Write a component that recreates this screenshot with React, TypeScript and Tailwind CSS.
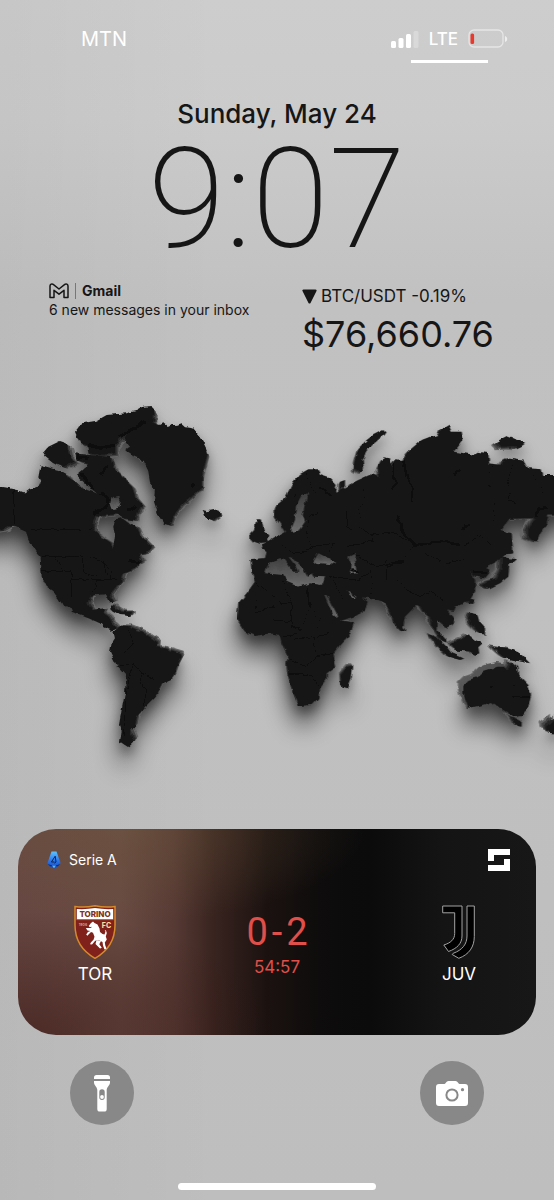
import React from "react";

const WEST = [
  // North America
  "M0 290L20 293L50 300L72 308L90 295L115 290L122 275L115 262L122 225L140 230L175 240L195 250L205 262L225 275L245 295L290 310L300 370L285 378L277 405L285 425L310 445L330 457L338 475L345 440L340 410L345 388L365 385L385 400L410 410L420 435L440 455L455 470L440 487L415 492L425 515L405 530L385 545L370 550L362 575L340 602L330 615L340 635L328 637L318 612L270 617L262 640L275 660L300 658L312 655L308 668L325 680L335 700L350 715L335 722L310 710L300 700L265 685L215 665L210 650L190 648L175 625L160 605L140 590L125 560L122 500L105 480L85 450L78 425L45 410L20 408L0 420L-60 430L-60 285Z",
  // Arctic islands
  "M128 190L145 170L180 153L200 160L205 190L223 215L190 230L160 220L135 200Z",
  "M225 125L245 100L290 92L320 75L380 70L410 62L430 50L455 48L462 65L460 95L440 100L400 120L365 140L345 165L345 190L300 195L265 190L262 165L240 160Z",
  "M225 190L270 195L330 200L340 235L370 265L395 290L405 320L427 345L412 370L405 390L370 385L350 372L300 378L275 365L295 345L290 310L250 275L230 255L255 235L265 220L230 210Z",
  // Greenland, Iceland, Cuba
  "M370 145L400 115L440 92L465 100L480 105L490 100L500 108L515 102L530 108L545 103L555 112L580 115L600 140L615 170L622 190L612 230L605 260L605 295L580 315L545 345L525 370L510 405L490 400L475 375L462 335L465 295L450 280L445 240L430 210L395 195L375 180L390 170Z",
  "M608 360L622 364L655 358L660 375L640 390L615 380Z",
  "M332 645L365 665L395 665L392 678L360 675L335 660Z",
  // South America
  "M340 725L360 708L385 709L425 726L450 742L472 757L471 772L495 776L542 790L545 800L530 830L518 865L485 880L465 920L430 955L410 980L404 1010L390 1025L402 1055L385 1072L360 1055L365 1025L357 1005L365 960L375 910L378 855L350 825L330 785L335 760L345 745Z",
];

const EAST = [
  // Europe, Asia and Africa
  "M135 325L140 315L165 295L190 245L210 222L235 208L265 208L270 225L300 235L320 255L315 275L330 270L350 258L385 240L425 222L450 232L445 200L460 172L480 175L485 200L495 178L520 180L540 150L575 120L600 110L625 105L642 80L655 72L665 95L695 95L700 120L680 145L670 155L735 165L745 155L775 160L778 190L815 195L830 175L880 182L895 205L935 208L940 225L1040 225L1040 345L955 345L950 370L930 400L920 425L895 415L895 385L915 353L840 355L812 390L845 400L850 460L825 462L800 485L770 500L778 520L765 535L740 530L720 515L735 540L735 575L720 600L690 612L665 625L650 630L670 655L668 675L652 683L630 665L620 660L620 690L648 715L650 728L635 720L605 675L600 650L580 635L570 618L560 615L525 650L520 680L530 697L510 690L490 665L475 625L460 605L430 595L395 592L413 605L405 630L370 650L332 662L372 668L362 700L330 735L310 760L318 800L290 820L290 840L270 865L265 895L245 915L205 918L190 880L172 820L170 790L175 770L155 730L150 705L120 700L75 708L45 695L22 660L25 610L50 580L75 545L65 520L62 480L105 478L110 455L95 445L100 435L130 415L150 405L165 395L150 370L135 350Z",
  // British Isles
  "M60 400L72 388L80 358L95 358L100 390L117 405L110 428L90 430L62 420Z",
  // Russian Arctic islands
  "M460 90L467 98L440 120L410 150L398 180L402 205L390 215L372 205L375 180L385 145L410 120L430 105Z",
  "M330 245L345 240L345 255L330 270Z",
  "M800 125L830 108L855 118L888 130L870 140L850 138L815 140Z",
  // Japan, Taiwan, Hainan, Philippines
  "M815 470L858 478L838 495L835 530L810 550L775 567L757 555L770 545L800 535L815 505Z",
  "M715 598L735 598L730 612L716 610Z",
  "M655 620L678 620L672 632L658 630Z",
  "M722 640L742 642L748 665L765 685L765 705L745 695L725 675L718 655Z",
  // Indonesia, New Guinea
  "M598 703L620 710L650 740L665 760L703 776L690 780L655 770L630 745Z",
  "M665 732L695 718L718 706L735 720L758 730L745 742L748 760L735 765L725 755L680 752L668 740Z",
  "M790 742L830 748L850 750L870 760L900 790L860 782L825 775L808 760Z",
  // Australia, Tasmania, New Zealand
  "M700 855L715 840L740 832L760 815L785 808L805 800L822 800L832 812L845 787L862 802L865 825L895 855L903 885L895 920L880 945L850 948L820 930L785 905L750 917L715 923L708 905L700 880Z",
  "M842 950L875 963L875 980L860 978Z",
  "M985 955L965 970L950 980L955 998L985 1002Z",
  // Madagascar
  "M332 825L354 800L367 798L362 835L350 865L334 860Z",
];

const SEAS = [
  "M215 285L235 280L225 310L218 345L225 365L205 393L180 395L195 360L197 320Z",
  "M105 520L115 490L150 478L165 480L190 515L205 515L195 495L175 470L190 475L215 500L235 535L245 520L250 530L285 532L275 555L240 550L205 560L170 545L160 525Z",
  "M250 485L265 460L290 472L315 485L300 495L260 492Z",
  "M355 470L380 458L375 480L380 520L362 522L365 495Z",
  "M283 585L290 585L318 640L322 655L310 645Z",
  "M350 570L380 592L372 595L355 582Z",
];

const BORDERS_EAST =
  "M205 225L195 300L195 340M228 215L240 250L262 285L262 340L240 345M240 345L230 400L245 440L310 430L300 455M150 430L190 460L225 455L250 440M400 260L405 300L385 330L395 360L385 380L425 405L430 420L350 440M425 405L490 398L530 420L560 440M350 330L350 380L365 390M370 460L440 500L520 480L555 430M420 500L430 560L420 590M470 480L470 540L440 570M500 530L530 570L570 590L600 575L640 600M580 455L640 490L700 480L720 455M700 440L750 405L790 440M790 200L765 240L800 280L790 340L800 390M850 190L835 240L840 300L860 310M910 225L935 260L940 290M310 540L340 600M300 530L380 540L420 520M75 545L120 580L155 610L185 610L160 540M80 600L75 640L130 620M185 610L185 680L215 690L240 620L230 560M235 560L235 615L285 615M130 620L130 660L185 665M240 620L270 660L260 710L300 700M190 720L250 710L260 770L230 800L175 780M260 770L310 760M175 820L220 820L235 850M215 825L250 830L265 860M205 918L205 860M160 710L200 700M780 808L780 905M780 858L850 858L850 948M850 890L900 890";
const RIDGES_EAST =
  "M490 190L490 230L500 250L485 265M520 180L530 230L550 270L545 310M500 345L512 370L515 395L560 438L590 430L640 425L690 435M670 225L692 208M695 390L720 370M270 260L300 285M920 350L925 325L955 320M730 515L770 520M365 510L385 515M470 500L520 485";
const BORDERS_WEST =
  "M40 300L40 408M90 418L270 420L275 410M125 500L270 498L300 510L335 540L330 570M245 500L255 550L290 560M215 540L215 620M125 545L215 545M165 500L190 545M215 568L350 568M290 570L280 610M310 510L320 560M350 830L400 820L430 850L460 870M385 720L400 760L370 790M400 820L380 900L370 1040M430 850L420 880L440 900L430 950";
const RIDGES_WEST =
  "M265 165L300 175L345 165M230 200L265 205M300 255L325 225M245 250L280 300M300 310L325 325L320 350L280 370M360 140L400 115L435 95M385 360L410 350M575 280L585 290M385 510L420 520";

function Continents() {
  return (
    <>
      <g>
        {WEST.map((d) => (
          <path key={d} d={d} />
        ))}
      </g>
      <g transform="translate(690 30)">
        {EAST.map((d) => (
          <path key={d} d={d} />
        ))}
      </g>
    </>
  );
}

function WorldMap() {
  return (
    <svg viewBox="0 0 1662 1200" className="block w-full" role="img" aria-label="World map">
      <defs>
        <filter id="rough" x="-5%" y="-5%" width="110%" height="110%">
          <feTurbulence type="fractalNoise" baseFrequency="0.06" numOctaves="1" seed="4" result="n" />
          <feDisplacementMap in="SourceGraphic" in2="n" scale="14" xChannelSelector="R" yChannelSelector="G" />
        </filter>
        <filter id="wide" x="-10%" y="-10%" width="120%" height="130%">
          <feGaussianBlur stdDeviation="36" />
        </filter>
        <filter id="near" x="-10%" y="-10%" width="120%" height="130%">
          <feGaussianBlur stdDeviation="16" />
        </filter>
        <linearGradient id="sea" x1="0" y1="0" x2="0" y2="1">
          <stop offset="0" stopColor="#3c3c3c" />
          <stop offset="1" stopColor="#6c6c6c" />
        </linearGradient>
        <linearGradient id="wall" x1="0" y1="0" x2="1" y2="1">
          <stop offset="0" stopColor="#666" />
          <stop offset="1" stopColor="#333" />
        </linearGradient>
      </defs>
      <g transform="translate(-6 60)" filter="url(#wide)" opacity="0.55">
        <Continents />
      </g>
      <g transform="translate(0 22)" filter="url(#near)" opacity="0.36">
        <Continents />
      </g>
      <g filter="url(#rough)">
        <g transform="translate(25 16) scale(0.97)" fill="#666">
          <Continents />
        </g>
        <g transform="translate(17 11) scale(0.98)" fill="#424242">
          <Continents />
        </g>
        <g transform="translate(8 6) scale(0.99)" fill="#282828">
          <Continents />
        </g>
        <g transform="translate(690 30)">
          <path
            fill="url(#wall)"
            d="M686 845L700 832L730 822L745 802L770 792L800 786L822 790L825 810L760 825L715 860L706 885L716 925L706 918L692 880Z"
          />
        </g>
        <g fill="#171717">
          <Continents />
        </g>
        <g fill="url(#sea)">
          <path d="M335 322L355 318L362 335L358 352L335 358L330 345Z" />
          <g transform="translate(690 30)">
            {SEAS.map((d) => (
              <path key={d} d={d} />
            ))}
          </g>
        </g>
        <g fill="none" stroke="#0b0b0b" strokeLinejoin="round">
          <path d={BORDERS_WEST} strokeWidth="2" />
          <path d={RIDGES_WEST} strokeWidth="9" />
          <g transform="translate(690 30)">
            <path d={BORDERS_EAST} strokeWidth="2" />
            <path d={RIDGES_EAST} strokeWidth="6" />
          </g>
        </g>
      </g>
    </svg>
  );
}

function Signal() {
  return (
    <svg width="28" height="18" viewBox="0 0 28 18" fill="#fff" aria-label="Signal strength">
      <rect x="0" y="11" width="5" height="7" rx="1.5" />
      <rect x="7.500" y="8" width="5" height="10" rx="1.5" />
      <rect x="15" y="4" width="5" height="14" rx="1.5" />
      <rect x="22.500" y="1" width="5" height="17" rx="1.5" opacity="0.25" />
    </svg>
  );
}

function Battery() {
  return (
    <svg width="40" height="20" viewBox="0 0 40 20" fill="none" aria-label="Battery low">
      <rect x="1" y="1" width="34" height="17" rx="5" stroke="#fff" strokeOpacity="0.5" strokeWidth="1.3" />
      <rect x="2.500" y="4.500" width="3.600" height="10.500" rx="1.500" fill="#e8392c" />
      <path d="M37 7v6c1.600-.6 2.200-1.700 2.200-3S38.600 7.600 37 7Z" fill="#fff" fillOpacity="0.65" />
    </svg>
  );
}

function GmailMark() {
  return (
    <svg width="20" height="16" viewBox="0 0 20 16" fill="none" stroke="#161616" strokeWidth="1.500" strokeLinejoin="round" aria-hidden="true">
      <path d="M1 14.500V3c0-1.700 1.900-2.600 3.200-1.600L10 6l5.800-4.600C17.100.4 19 1.300 19 3v11.500h-4V7.300L10 11.200 5 7.300v7.200H1Z" />
    </svg>
  );
}

function SerieAMark() {
  return (
    <svg width="14" height="18" viewBox="0 0 14 18" aria-hidden="true">
      <defs>
        <linearGradient id="sa" x1="0" y1="0" x2="0" y2="1">
          <stop offset="0" stopColor="#5cc4ff" />
          <stop offset="0.500" stopColor="#2c7bf0" />
          <stop offset="1" stopColor="#1746b8" />
        </linearGradient>
      </defs>
      <path d="M4.500.5h5L13.700 12.500 11 15.200 7 17.700 3 15.200.3 12.500Z" fill="url(#sa)" />
      <path d="M8.200 5.200 4.400 11h3M8.200 5.200 9 11 7.300 12.200" fill="none" stroke="#0b2350" strokeWidth="1" />
      <path d="m.6 12.800 3.400 1.400h6l3.400-1.400L11 15.300H3Z" fill="#0d2f7d" />
      <path d="m5 14.600 2 2.600 2-2.600Z" fill="#57b8ff" />
    </svg>
  );
}

function SofaMark() {
  return (
    <svg width="22" height="22" viewBox="0 0 22 22" fill="#fff" aria-label="Live score provider">
      <path d="M0 0h22v6H6v6H0Z" />
      <path d="M22 22H0v-6h16v-6h6Z" />
    </svg>
  );
}

function TorinoCrest() {
  return (
    <svg width="42" height="54" viewBox="0 0 42 54" aria-label="Torino crest">
      <path d="M1 1.500Q11 3 21 .7 31 3 41 1.500V20c0 15-8 26.500-20 33.300C9 46.500 1 35 1 20Z" fill="#80211c" stroke="#d58a2c" strokeWidth="1.500" />
      <path d="M2.800 4Q12 4.600 21 3q9 1.600 18.200 1v10.100H2.800Z" fill="#fff" />
      <text x="21" y="12" textAnchor="middle" fontSize="8" fontWeight="800" fontFamily="Inter, sans-serif" fill="#80301c">TORINO</text>
      <path d="M2.500 14.600h37" stroke="#d58a2c" strokeWidth="0.800" />
      <text x="32.500" y="23.200" textAnchor="middle" fontSize="7" fontWeight="800" fontFamily="Inter, sans-serif" fill="#f7dfa0">FC</text>
      <text x="9" y="20.500" textAnchor="middle" fontSize="3.500" fontWeight="600" fontFamily="Inter, sans-serif" fill="#d9a8a0">1906</text>
      <g transform="translate(0 1)" fill="#fff">
        <path d="m17 17 2-1.500 1.500 1.500 3 1.500 2 4 .5 3.500 2.500 2 2 .5 1-3-.8-1.500 1.300.6.800 2.400-1 3.500 1 3-2 3 .5 3 1.200 3-2 1-1.500-4-.5-3.500-3-1.500-2.500-.5-2 1-3 3.500-2-.3 1-2 2.500-2.500 1-3-1.500-4-2-.6-2 2-1.600 1.600-1.200-1.200 1.700-2.600 2.500-1-3-.4-1.500-2.500h5l1-1.200-2 .4-1.200-1.200Z" />
        <path d="m22.500 34-1 4 4.500 4.500 1.800-.7-2.500-3.500L27 35Z" />
      </g>
    </svg>
  );
}

function JuventusMark() {
  return (
    <svg width="33" height="54" viewBox="0 0 33 54" fill="#000" stroke="#a3a3a3" strokeWidth="1" aria-label="Juventus crest">
      <path d="M.7 1H20v30c0 7.500-5 12.500-13.500 15.500L1.800 40C8.500 38 12.700 34.500 12.700 28.500V7.800H.7Z" />
      <path d="M25 1h7.300v30.500C32.300 42 27 49.500 16.800 53.300l-6.600-3.800 1-1.200C20.500 45 25 39 25 31Z" />
    </svg>
  );
}

function Flashlight() {
  return (
    <svg width="16" height="37" viewBox="0 0 16 37" fill="#fff" aria-hidden="true">
      <path d="M2.500 0h11A2.500 2.500 0 0 1 16 2.500V4H0V2.500A2.500 2.500 0 0 1 2.500 0Z" />
      <path fillRule="evenodd" d="M0 6h16v1.500c0 2.700-3.300 4.500-3.300 7.500v19a2.600 2.600 0 0 1-2.600 2.600H5.900A2.600 2.600 0 0 1 3.300 34V15C3.300 12 0 10.200 0 7.500ZM8 14.300a2.700 2.700 0 0 0-2.700 2.700v5.200a2.700 2.700 0 0 0 5.400 0V17A2.700 2.700 0 0 0 8 14.300Z" />
      <circle cx="8" cy="22" r="1.900" />
    </svg>
  );
}

function Camera() {
  return (
    <svg width="32" height="25" viewBox="0 0 32 25" aria-hidden="true">
      <path d="M3 3h5.500c1.200 0 1.700-3 4-3h7c2.300 0 2.800 3 4 3H29a3 3 0 0 1 3 3v16a3 3 0 0 1-3 3H3a3 3 0 0 1-3-3V6a3 3 0 0 1 3-3Z" fill="#fff" />
      <circle cx="16" cy="14" r="5.600" fill="none" stroke="#888" strokeWidth="2" />
      <circle cx="26.500" cy="8.700" r="1.600" fill="#888" />
    </svg>
  );
}

function Team({ name, children }: { name: string; children: React.ReactNode }) {
  return (
    <div className="flex w-[70px] flex-col items-center gap-[3px]">
      {children}
      <span className="text-[17px] leading-6 text-white">{name}</span>
    </div>
  );
}

export default function App() {
  return (
    <main className="flex min-h-screen w-full flex-col overflow-hidden bg-[linear-gradient(to_right,rgba(0,0,0,0.03),transparent_40%),linear-gradient(to_bottom,#cdcdcd,#cbcbcb_10%,#c1c1c1_25%,#bebebe)] font-['Inter',sans-serif] text-[#161616]">
      <header className="flex items-start justify-between pt-[27px] pr-[46px] pl-[81px] text-white">
        <span className="text-[20px] leading-6">MTN</span>
        <div className="flex flex-col items-center gap-[9px]">
          <div className="flex h-6 items-center gap-[10px]">
            <Signal />
            <span className="text-[17px] leading-6 font-medium">LTE</span>
            <Battery />
          </div>
          <div className="h-[3px] w-[77px] bg-white" />
        </div>
      </header>

      <section className="flex flex-col items-center pt-[35px]">
        <p className="text-[26px] leading-8 font-medium">Sunday, May 24</p>
        <time className="font-['Roboto',sans-serif] text-[140px] leading-[138px] font-extralight">9:07</time>
      </section>

      <section className="grid grid-cols-[253px_1fr] pt-[14px] pl-[49px]">
        <div>
          <div className="flex h-[18px] items-center gap-[6px]">
            <GmailMark />
            <span className="h-4 w-px bg-[#777]" />
            <span className="text-[14px] leading-[18px] font-bold">Gmail</span>
          </div>
          <p className="text-[14px] leading-5">6 new messages in your inbox</p>
        </div>
        <div className="pt-[2px]">
          <div className="flex items-center gap-1 text-[17px] leading-6">
            <svg width="15" height="15" viewBox="0 0 15 15" fill="#161616" aria-hidden="true">
              <path d="M1.500.5h12c1 0 1.400.8 1 1.600l-6 11.800c-.4.8-1.600.8-2 0L.5 2.100C.1 1.300.5.5 1.500.5Z" />
            </svg>
            <span>BTC/USDT -0.19%</span>
          </div>
          <p className="text-[36px] leading-[52px]">$76,660.76</p>
        </div>
      </section>

      <div className="pt-[30px]">
        <WorldMap />
      </div>

      <section className="mx-[18px] mt-[39px] flex flex-col rounded-[38px] bg-[radial-gradient(ellipse_50%_60%_at_0%_100%,rgba(52,18,16,0.55),transparent),radial-gradient(ellipse_45%_45%_at_22%_0%,rgba(112,92,62,0.4),transparent),linear-gradient(to_right,#674742,#684a42_20%,#573a34_30%,#38231f_38%,#1b1210_48%,#0e0c0c_58%,#0b0b0c_68%,#141415_82%,#171717)] px-[26px] pt-[20px] pb-[49px]">
        <div className="flex items-center justify-between pl-[3px]">
          <div className="flex items-center gap-2">
            <SerieAMark />
            <span className="text-[14px] leading-[22px] text-white">Serie A</span>
          </div>
          <SofaMark />
        </div>
        <div className="flex justify-between px-[16px] pt-[34px]">
          <Team name="TOR">
            <TorinoCrest />
          </Team>
          <div className="flex flex-col items-center pt-[7px] text-[#e04f49]">
            <div className="flex gap-1 font-['Roboto',sans-serif] text-[38px] leading-10">
              <span>0</span>
              <span>-</span>
              <span>2</span>
            </div>
            <span className="text-[17px] leading-[30px]">54:57</span>
          </div>
          <Team name="JUV">
            <JuventusMark />
          </Team>
        </div>
      </section>

      <nav className="flex justify-between px-[70px] pt-[26px]">
        <button type="button" aria-label="Flashlight" className="flex size-16 items-center justify-center rounded-full bg-[#888]">
          <Flashlight />
        </button>
        <button type="button" aria-label="Camera" className="flex size-16 items-center justify-center rounded-full bg-[#888]">
          <Camera />
        </button>
      </nav>

      <div className="mx-auto mt-auto mb-[10px] h-[7px] w-[198px] rounded-full bg-white" />
    </main>
  );
}
